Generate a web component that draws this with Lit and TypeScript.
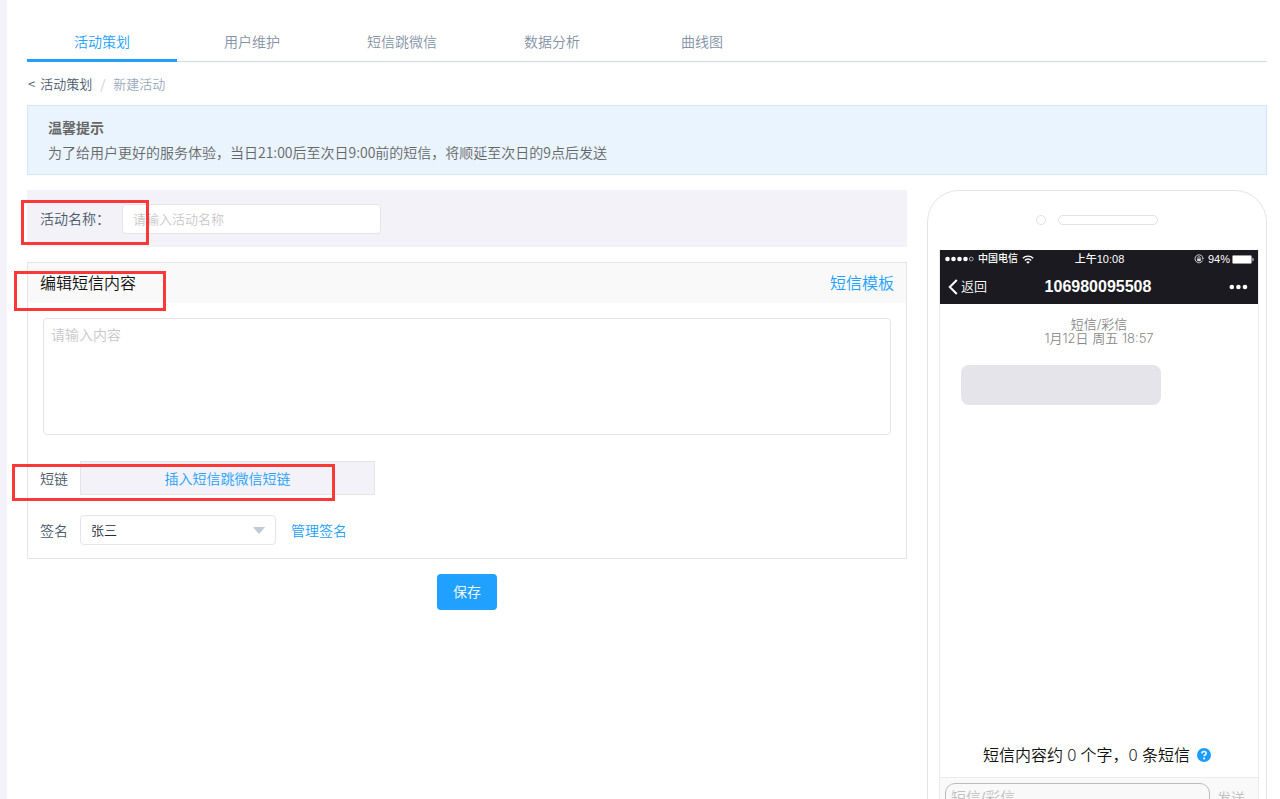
import { LitElement, html, css } from "lit";
import { customElement, property } from "lit/decorators.js";

@customElement("phone-preview")
export class PhonePreview extends LitElement {
  @property({ type: String }) number = "106980095508";
  @property({ type: Number }) chars = 0;
  @property({ type: Number }) parts = 0;

  static styles = css`
    * { box-sizing: border-box; }
    :host {
      display: block;
      font-family: "Liberation Sans", "Noto Sans CJK SC", sans-serif;
    }
    .phone {
      border: 1px solid #e5e5e5;
      border-radius: 32px;
      padding: 24px 7px 60px 11px;
      background: #fff;
    }
    .speaker {
      display: flex;
      align-items: center;
      justify-content: center;
      gap: 12px;
      height: 10px;
      margin: 0 4px 25px 0;
    }
    .camera { width: 10px; height: 10px; border: 1px solid #e1e1e1; border-radius: 50%; }
    .slot { width: 100px; height: 10px; border: 1px solid #e1e1e1; border-radius: 5px; }
    .screen { border: 1px solid #ebebeb; border-top: 0; }
    .top { background: #1b1a20; color: #fff; height: 54px; }
    .status, .nav {
      display: grid;
      grid-template-columns: 1fr auto 1fr;
      align-items: center;
    }
    .status { height: 18px; padding: 0 4px 0 5px; font-size: 11px; line-height: 18px; }
    .nav { height: 36px; padding: 0 10px 0 8px; }
    .group { display: flex; align-items: center; gap: 4px; }
    .end { justify-content: flex-end; }
    .carrier { font-size: 10px; font-weight: 500; }
    .time { font-weight: 500; }
    .battery { display: flex; align-items: center; gap: 2px; }
    .back {
      display: flex;
      align-items: center;
      gap: 3px;
      border: 0;
      padding: 0;
      background: none;
      color: #fff;
      font: inherit;
      font-size: 13px;
      line-height: 16px;
    }
    .title { margin: 0; font-size: 16px; font-weight: 700; line-height: 38px; }
    .more { border: 0; padding: 0; background: none; display: flex; }
    svg { display: block; flex: none; }
    .body { display: flex; flex-direction: column; min-height: 473px; padding: 13px 21px 10px; }
    .meta {
      text-align: center;
      color: #888;
      font-family: Inter, "Noto Sans CJK SC", sans-serif;
      font-size: 13px;
      line-height: 14px;
    }
    .bubble { width: 200px; height: 40px; margin-top: 20px; border-radius: 8px; background: #e5e4ea; }
    .count {
      display: flex;
      align-items: center;
      justify-content: center;
      gap: 7px;
      margin-top: auto;
      padding-right: 4px;
      color: #111;
      font-family: "Noto Sans", "Noto Sans CJK SC", sans-serif;
      font-size: 16px;
      line-height: 24px;
      white-space: nowrap;
    }
    .reply {
      display: flex;
      align-items: center;
      gap: 7px;
      border-top: 1px solid #ebebeb;
      background: #f9f9f9;
      padding: 5px 13px 5px 5px;
    }
    .reply input {
      flex: 1;
      min-width: 0;
      height: 28px;
      border: 1px solid #bbb;
      border-radius: 10px;
      background: #f9f9f9;
      padding: 0 5px;
      font: inherit;
      font-size: 15px;
    }
    .reply input::placeholder { color: #c0c0c0; opacity: 1; }
    .send { border: 0; padding: 0; background: none; color: #c0c0c0; font: inherit; font-size: 14px; }
  `;

  render() {
    return html`
      <div class="phone">
        <div class="speaker"><span class="camera"></span><span class="slot"></span></div>
        <div class="screen">
          <div class="top">
            <div class="status">
              <div class="group">
                <svg width="29" height="6" viewBox="0 0 29 6" fill="#fff">
                  <circle cx="2.5" cy="3" r="2.3" /><circle cx="8.5" cy="3" r="2.3" />
                  <circle cx="14.5" cy="3" r="2.3" /><circle cx="20.5" cy="3" r="2.3" />
                  <circle cx="26.3" cy="3" r="1.9" fill="none" stroke="#ccc" stroke-width=".8" />
                </svg>
                <span class="carrier">中国电信</span>
                <svg width="12" height="9" viewBox="0 0 12 9" fill="none" stroke="#fff" stroke-width="1.4">
                  <path d="M.8 3.3a7.4 7.4 0 0 1 10.4 0M2.8 5.4a4.5 4.5 0 0 1 6.4 0" />
                  <path d="M6 8.8 4.2 7a2.6 2.6 0 0 1 3.6 0z" fill="#fff" stroke="none" />
                </svg>
              </div>
              <span class="time">上午10:08</span>
              <div class="group end">
                <svg width="10" height="10" viewBox="0 0 10 10" fill="none" stroke="#ddd">
                  <path d="M8.6 6.6A4 4 0 1 1 9 4.4" stroke-width=".9" />
                  <path d="M7.6 4.2h2.2L8.9 5.7z" fill="#ddd" stroke="none" />
                  <rect x="3.2" y="4.6" width="3.6" height="2.6" fill="#ddd" stroke="none" />
                  <path d="M3.9 4.8V3.7a1.1 1.1 0 0 1 2.2 0v1.1" stroke-width=".8" />
                </svg>
                <div class="battery">
                  <span>94%</span>
                  <svg width="22" height="9" viewBox="0 0 22 9">
                    <rect x=".5" y=".5" width="19" height="8" rx="1" fill="#fff" stroke="#999" />
                    <path d="M20.5 2.5c1.4.6 1.4 3.4 0 4z" fill="#fff" />
                  </svg>
                </div>
              </div>
            </div>
            <div class="nav">
              <div class="group">
                <button class="back" type="button">
                  <svg width="10" height="16" viewBox="0 0 10 16" fill="none" stroke="#fff" stroke-width="2">
                    <path d="M8.8 1 1.8 8l7 7" />
                  </svg>返回
                </button>
              </div>
              <h2 class="title">${this.number}</h2>
              <div class="group end">
                <button class="more" type="button" aria-label="更多">
                  <svg width="19" height="6" viewBox="0 0 19 6" fill="#fff">
                    <circle cx="2.8" cy="3" r="2.3" /><circle cx="9.4" cy="3" r="2.3" /><circle cx="16" cy="3" r="2.3" />
                  </svg>
                </button>
              </div>
            </div>
          </div>
          <div class="body">
            <div class="meta">短信/彩信</div>
            <div class="meta">1月12日 周五 18:57</div>
            <div class="bubble"></div>
            <div class="count">
              <span>短信内容约 ${this.chars} 个字，${this.parts} 条短信</span>
              <svg width="14" height="14" viewBox="0 0 14 14">
                <circle cx="7" cy="7" r="7" fill="#1b9dff" />
                <path d="M4.9 5.5c0-2.8 4.3-2.7 4.3-.2 0 1.6-2.1 1.5-2.1 3" fill="none" stroke="#fff" stroke-width="1.5" />
                <circle cx="7.1" cy="10.5" r="1" fill="#fff" />
              </svg>
            </div>
          </div>
          <div class="reply">
            <input type="text" placeholder="短信/彩信" aria-label="短信/彩信" />
            <button class="send" type="button">发送</button>
          </div>
        </div>
      </div>
    `;
  }
}

@customElement("app-root")
export class AppRoot extends LitElement {
  private tabs = ["活动策划", "用户维护", "短信跳微信", "数据分析", "曲线图"];

  static styles = css`
    * { box-sizing: border-box; }
    :host {
      display: block;
      height: 100vh;
      overflow: hidden;
      background: #fff;
      color: #48576a;
      font-family: "Noto Sans CJK SC", sans-serif;
      font-size: 14px;
      font-weight: 350;
    }
    .page {
      position: relative;
      min-height: 100vh;
      border-left: 7px solid #f3f2f8;
      padding: 22px 13px 0 20px;
    }
    a { text-decoration: none; color: #20a0ff; }
    .tabs { display: flex; border-bottom: 1px solid #d1dbe5; }
    .tab {
      width: 150px;
      height: 40px;
      margin-bottom: -1px;
      line-height: 38px;
      text-align: center;
      color: #8391a5;
    }
    .tab.active { color: #20a0ff; border-bottom: 3px solid #20a0ff; }
    .crumbs { display: flex; padding: 12px 1px 11px; font-size: 13px; line-height: 20px; }
    .crumbs a { display: flex; gap: 5px; color: #48576a; }
    .slash { margin: 0 8px; color: #bfcbd9; }
    .crumbs .here { color: #97a8be; }
    .tip {
      border: 1px solid #d3e7fa;
      background: #e9f4ff;
      color: #666;
      padding: 9px 20px;
      line-height: 25px;
    }
    .tip p, .tip h1 { margin: 0; font-size: 14px; }
    .columns {
      display: grid;
      grid-template-columns: minmax(0, 1fr) 340px;
      gap: 20px;
      align-items: start;
      margin-top: 15px;
    }
    .name { display: flex; align-items: center; gap: 12px; background: #f3f2f8; padding: 14px 13px 13px; }
    .name label { line-height: 20px; padding-bottom: 2px; }
    .name input {
      width: 259px;
      height: 30px;
      border: 1px solid #e5e5e5;
      border-radius: 4px;
      padding: 0 10px 2px;
      font: inherit;
      font-size: 13px;
    }
    ::placeholder { color: #c8c8c8; opacity: 1; }
    .card { border: 1px solid #e5e5e5; margin-top: 15px; padding-bottom: 13px; }
    .head {
      display: flex;
      justify-content: space-between;
      background: #f9f9f9;
      padding: 0 12px 2px;
      font-size: 16px;
      line-height: 38px;
    }
    .head h2 { margin: 0; font-size: 16px; font-weight: inherit; color: #111; }
    .write { padding: 15px 15px 26px; }
    textarea {
      display: block;
      width: 100%;
      height: 117px;
      border: 1px solid #e5e5e5;
      border-radius: 4px;
      padding: 5px 7px;
      font: inherit;
      line-height: 20px;
      resize: none;
    }
    .row { display: flex; align-items: center; padding: 0 12px; }
    .row + .row { margin-top: 20px; }
    .row label { width: 40px; }
    .insert {
      width: 295px;
      height: 34px;
      border: 1px solid #e5e5e5;
      background: #f3f2f8;
      color: #20a0ff;
      font: inherit;
      padding: 0;
    }
    .picker {
      display: grid;
      align-items: center;
      width: 196px;
      margin-right: 15px;
    }
    .picker > * { grid-area: 1 / 1; }
    select {
      appearance: none;
      width: 100%;
      height: 30px;
      border: 1px solid #e5e5e5;
      border-radius: 4px;
      background: #fff;
      color: #1f2d3d;
      padding: 0 10px 2px;
      font: inherit;
      font-size: 13px;
    }
    .arrow { justify-self: end; margin-right: 11px; pointer-events: none; }
    .actions { display: flex; justify-content: center; padding-top: 15px; }
    .save {
      width: 60px;
      height: 36px;
      border: 0;
      border-radius: 4px;
      background: #20a0ff;
      color: #fff;
      font: inherit;
      padding: 0 0 2px;
    }
    .mark { position: absolute; border: 3px solid #fb3838; pointer-events: none; }
    .mark-name { left: 14px; top: 200px; width: 128px; height: 45px; }
    .mark-edit { left: 7px; top: 271px; width: 152px; height: 40px; }
    .mark-link { left: 5px; top: 464px; width: 323px; height: 37px; }
  `;

  render() {
    return html`
      <div class="page">
        <nav class="tabs">
          ${this.tabs.map((t, i) => html`<a href="#" class="tab ${i === 0 ? "active" : ""}">${t}</a>`)}
        </nav>
        <div class="crumbs">
          <a href="#"><span>&lt;</span><span>活动策划</span></a><span class="slash">/</span><span class="here">新建活动</span>
        </div>
        <section class="tip">
          <h1>温馨提示</h1>
          <p>为了给用户更好的服务体验，当日21:00后至次日9:00前的短信，将顺延至次日的9点后发送</p>
        </section>
        <div class="columns">
          <main>
            <div class="name">
              <label for="name">活动名称：</label>
              <input id="name" type="text" placeholder="请输入活动名称" />
            </div>
            <section class="card">
              <div class="head"><h2>编辑短信内容</h2><a href="#">短信模板</a></div>
              <div class="write">
                <textarea placeholder="请输入内容" aria-label="编辑短信内容"></textarea>
              </div>
              <div class="row">
                <label for="insert">短链</label>
                <button id="insert" class="insert" type="button">插入短信跳微信短链</button>
              </div>
              <div class="row">
                <label for="sign">签名</label>
                <div class="picker">
                  <select id="sign"><option>张三</option></select>
                  <svg class="arrow" width="12" height="7" viewBox="0 0 12 7"><path d="M0 0h12L7 6q-1 1-2 0z" fill="#bfcbd9" /></svg>
                </div>
                <a href="#">管理签名</a>
              </div>
            </section>
            <div class="actions"><button class="save" type="button">保存</button></div>
          </main>
          <phone-preview></phone-preview>
        </div>
        <div class="mark mark-name"></div>
        <div class="mark mark-edit"></div>
        <div class="mark mark-link"></div>
      </div>
    `;
  }
}
